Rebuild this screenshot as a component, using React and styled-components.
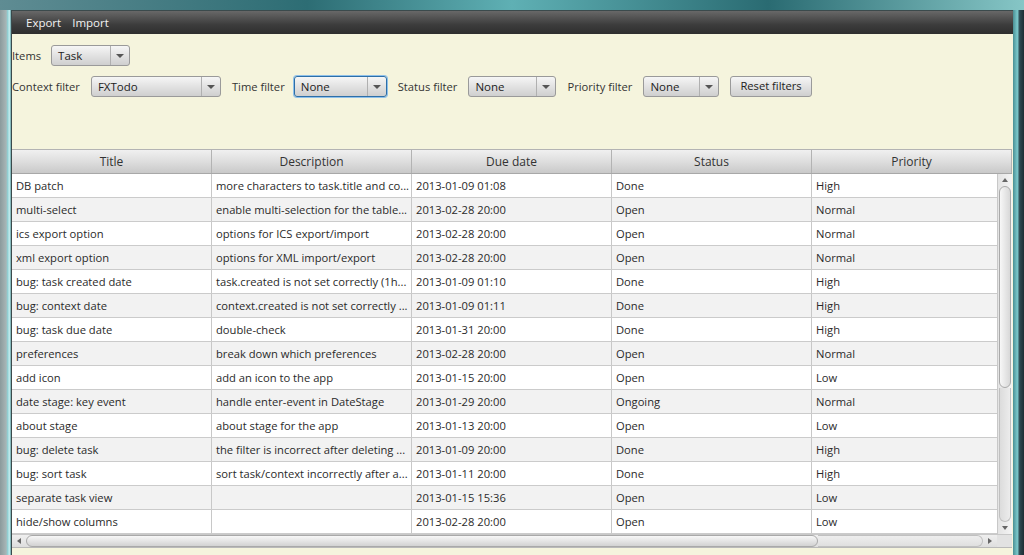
import React from 'react'
import styled, { createGlobalStyle } from 'styled-components'

const Global = createGlobalStyle`
  html, body { margin: 0; padding: 0; }
  body {
    width: 1024px;
    height: 555px;
    overflow: hidden;
    font-family: "Open Sans", "Noto Sans", sans-serif;
    font-size: 11.2px;
    color: #2b2b2b;
  }
`

const Desktop = styled.div`
  width: 1024px;
  height: 555px;
  display: flex;
  flex-direction: column;
  background: linear-gradient(90deg, #5f8c93 0%, #2d6d74 30%, #5fb0b4 50%, #2a6b72 75%, #86c6c6 100%);
`

const TopStrip = styled.div`
  height: 10px;
  flex: none;
`

const Middle = styled.div`
  flex: 1;
  display: flex;
  min-height: 0;
`

const LeftFrame = styled.div`
  width: 11px;
  flex: none;
  background: linear-gradient(90deg, #8a9a9c 0%, #a7b5b6 55%, #8fd0d4 70%, #c5eef0 85%, #6aa2a6 100%);
`

const RightFrame = styled.div`
  width: 11px;
  flex: none;
  background: linear-gradient(90deg, #4a8f94 0%, #7cc9cc 40%, #2e4a52 60%, #1c2d33 100%);
`

const Window = styled.div`
  flex: 1;
  min-width: 0;
  display: flex;
  flex-direction: column;
  background: #f5f4dd;
  border-left: 1px solid #3b4a4c;
  border-top: 1px solid #3b4a4c;
`

const MenuBar = styled.div`
  height: 23px;
  flex: none;
  display: flex;
  align-items: center;
  gap: 11px;
  padding-left: 14px;
  background: linear-gradient(#686868, #3c3c3c 60%, #2e2e2e);
  color: #f2f2f2;
  font-size: 11.5px;
`

const MenuItem = styled.span`
  cursor: default;
`

const Controls = styled.div`
  display: flex;
  flex-direction: column;
  gap: 10px;
  padding: 11px 0 0 0;
  height: 115px;
  flex: none;
  box-sizing: border-box;
`

const Row = styled.div`
  display: flex;
  align-items: center;
`

const Label = styled.span`
  margin-right: ${p => p.$gap}px;
  color: #333;
`

const Combo = styled.div`
  width: ${p => p.$w}px;
  height: 21px;
  flex: none;
  box-sizing: border-box;
  display: flex;
  border: 1px solid ${p => (p.$focused ? '#2d6fa8' : '#9a9a9a')};
  border-radius: 3px;
  background: linear-gradient(#f6f6f6, #e2e2e2 50%, #cfcfcf);
  margin-right: ${p => p.$mr || 0}px;
  box-shadow: ${p => (p.$focused ? '0 0 0 1px #8fc0ea' : 'none')};
`

const ComboText = styled.span`
  flex: 1;
  padding-left: 6px;
  line-height: 19px;
  color: #222;
  font-size: 11.5px;
`

const ComboArrow = styled.span`
  width: 18px;
  border-left: 1px solid #b0b0b0;
  display: flex;
  align-items: center;
  justify-content: center;
  &::after {
    content: '';
    border-left: 4px solid transparent;
    border-right: 4px solid transparent;
    border-top: 4px solid #555;
  }
`

const Button = styled.div`
  height: 21px;
  box-sizing: border-box;
  padding: 0 9px;
  border: 1px solid #9a9a9a;
  border-radius: 3px;
  background: linear-gradient(#f6f6f6, #e2e2e2 50%, #cfcfcf);
  line-height: 18px;
  color: #222;
`

const Table = styled.div`
  flex: 1;
  display: flex;
  flex-direction: column;
  border-top: 1px solid #b3b3b3;
  background: #fff;
  margin-right: 1px;
  min-height: 0;
`

const HeaderRow = styled.div`
  display: grid;
  grid-template-columns: repeat(5, 200px);
  height: 24px;
  box-sizing: border-box;
  flex: none;
  background: linear-gradient(#f0f0f0, #dedede 50%, #c9c9c9);
  border-bottom: 1px solid #a8a8a8;
  overflow: hidden;
`

const HeaderCell = styled.div`
  text-align: center;
  line-height: 23px;
  border-right: 1px solid #b3b3b3;
  color: #333;
  font-size: 12px;
`

const Body = styled.div`
  display: flex;
  height: 360px;
  flex: none;
`

const Rows = styled.div`
  flex: 1;
  min-width: 0;
  overflow: hidden;
`

const DataRow = styled.div`
  display: grid;
  grid-template-columns: repeat(5, 200px);
  height: 24px;
  box-sizing: border-box;
  border-bottom: 1px solid #cbcbcb;
  background: ${p => (p.$odd ? '#f2f2f2' : '#ffffff')};
`

const Cell = styled.div`
  padding-left: 4px;
  line-height: 23px;
  border-right: 1px solid #c8c8c8;
  white-space: nowrap;
  overflow: hidden;
  color: #2a2a2a;
`

const VScroll = styled.div`
  width: 14px;
  flex: none;
  display: flex;
  flex-direction: column;
  background: linear-gradient(90deg, #e4e4e4, #f4f4f4);
  border-left: 1px solid #c8c8c8;
`

const ArrowBox = styled.div`
  width: 14px;
  height: 12px;
  flex: none;
  display: flex;
  align-items: center;
  justify-content: center;
  &::after {
    content: '';
    border-left: 3px solid transparent;
    border-right: 3px solid transparent;
    ${p => p.$dir === 'up' && 'border-bottom: 4px solid #666;'}
    ${p => p.$dir === 'down' && 'border-top: 4px solid #666;'}
    ${p => p.$dir === 'left' && 'border-right: 4px solid #666; border-left: none; border-top: 3px solid transparent; border-bottom: 3px solid transparent;'}
    ${p => p.$dir === 'right' && 'border-left: 4px solid #666; border-right: none; border-top: 3px solid transparent; border-bottom: 3px solid transparent;'}
  }
`

const VTrack = styled.div`
  flex: 1;
  display: flex;
  flex-direction: column;
  padding: 0 1px;
`

const VThumb = styled.div`
  height: 200px;
  border: 1px solid #a9a9a9;
  border-radius: 6px;
  background: linear-gradient(90deg, #f7f7f7, #d8d8d8);
`

const VRest = styled.div`
  flex: 1;
  border: 1px solid #c0c0c0;
  border-top: none;
  border-radius: 0 0 6px 6px;
  background: linear-gradient(90deg, #dcdcdc, #ececec);
`

const HScrollRow = styled.div`
  display: flex;
  height: 12px;
  flex: none;
  border-top: 1px solid #c8c8c8;
  border-bottom: 1px solid #b9b9b9;
  background: linear-gradient(#efefef, #dedede);
`

const HTrack = styled.div`
  flex: 1;
  display: flex;
`

const HThumb = styled.div`
  width: 790px;
  border: 1px solid #a9a9a9;
  border-radius: 6px;
  background: linear-gradient(#f7f7f7, #d2d2d2);
`

const HRest = styled.div`
  flex: 1;
  border: 1px solid #c0c0c0;
  border-left: none;
  border-radius: 0 6px 6px 0;
`

const Corner = styled.div`
  width: 15px;
  background: #e2e2e2;
`

const BottomStrip = styled.div`
  flex: 1;
  background: #f5f4dd;
`

const columns = ['Title', 'Description', 'Due date', 'Status', 'Priority']

const tasks = [
  ['DB patch', 'more characters to task.title and co...', '2013-01-09 01:08', 'Done', 'High'],
  ['multi-select', 'enable multi-selection for the table...', '2013-02-28 20:00', 'Open', 'Normal'],
  ['ics export option', 'options for ICS export/import', '2013-02-28 20:00', 'Open', 'Normal'],
  ['xml export option', 'options for XML import/export', '2013-02-28 20:00', 'Open', 'Normal'],
  ['bug: task created date', 'task.created is not set correctly (1h...', '2013-01-09 01:10', 'Done', 'High'],
  ['bug: context date', 'context.created is not set correctly ...', '2013-01-09 01:11', 'Done', 'High'],
  ['bug: task due date', 'double-check', '2013-01-31 20:00', 'Done', 'High'],
  ['preferences', 'break down which preferences', '2013-02-28 20:00', 'Open', 'Normal'],
  ['add icon', 'add an icon to the app', '2013-01-15 20:00', 'Open', 'Low'],
  ['date stage: key event', 'handle enter-event in DateStage', '2013-01-29 20:00', 'Ongoing', 'Normal'],
  ['about stage', 'about stage for the app', '2013-01-13 20:00', 'Open', 'Low'],
  ['bug: delete task', 'the filter is incorrect after deleting ...', '2013-01-09 20:00', 'Done', 'High'],
  ['bug: sort task', 'sort task/context incorrectly after a...', '2013-01-11 20:00', 'Done', 'High'],
  ['separate task view', '', '2013-01-15 15:36', 'Open', 'Low'],
  ['hide/show columns', '', '2013-02-28 20:00', 'Open', 'Low'],
]

const App = () => {
  return (
    <>
      <Global />
      <Desktop>
        <TopStrip />
        <Middle>
          <LeftFrame />
          <Window>
            <MenuBar>
              <MenuItem>Export</MenuItem>
              <MenuItem>Import</MenuItem>
            </MenuBar>
            <Controls>
              <Row>
                <Label $gap={10}>Items</Label>
                <Combo $w={79}>
                  <ComboText>Task</ComboText>
                  <ComboArrow />
                </Combo>
              </Row>
              <Row>
                <Label $gap={11}>Context filter</Label>
                <Combo $w={130} $mr={11}>
                  <ComboText>FXTodo</ComboText>
                  <ComboArrow />
                </Combo>
                <Label $gap={9}>Time filter</Label>
                <Combo $w={93} $mr={11} $focused>
                  <ComboText>None</ComboText>
                  <ComboArrow />
                </Combo>
                <Label $gap={11}>Status filter</Label>
                <Combo $w={88} $mr={11}>
                  <ComboText>None</ComboText>
                  <ComboArrow />
                </Combo>
                <Label $gap={11}>Priority filter</Label>
                <Combo $w={76} $mr={11}>
                  <ComboText>None</ComboText>
                  <ComboArrow />
                </Combo>
                <Button>Reset filters</Button>
              </Row>
            </Controls>
            <Table>
              <HeaderRow>
                {columns.map(c => (
                  <HeaderCell key={c}>{c}</HeaderCell>
                ))}
              </HeaderRow>
              <Body>
                <Rows>
                  {tasks.map((t, i) => (
                    <DataRow key={t[0]} $odd={i % 2 === 1}>
                      {t.map((v, j) => (
                        <Cell key={j}>{v}</Cell>
                      ))}
                    </DataRow>
                  ))}
                </Rows>
                <VScroll>
                  <ArrowBox $dir="up" />
                  <VTrack>
                    <VThumb />
                    <VRest />
                  </VTrack>
                  <ArrowBox $dir="down" />
                </VScroll>
              </Body>
              <HScrollRow>
                <ArrowBox $dir="left" />
                <HTrack>
                  <HThumb />
                  <HRest />
                </HTrack>
                <ArrowBox $dir="right" />
                <Corner />
              </HScrollRow>
              <BottomStrip />
            </Table>
          </Window>
          <RightFrame />
        </Middle>
      </Desktop>
    </>
  )
}

export default App
